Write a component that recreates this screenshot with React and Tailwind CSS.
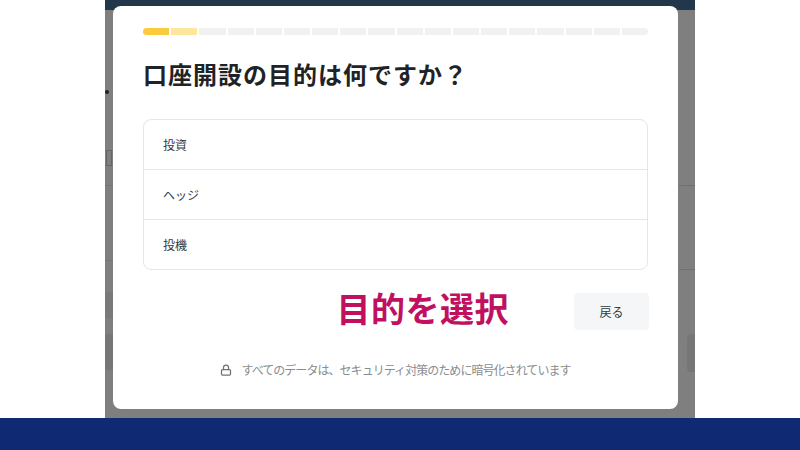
import { Lock } from 'lucide-react'

const segments = Array.from({ length: 18 }, (_, i) => i)
const options = ['投資', 'ヘッジ', '投機']

function Progress() {
  return (
    <div className="flex h-[7px] gap-[2px]">
      {segments.map((i) => (
        <div
          key={i}
          className={
            i === 0
              ? 'flex-1 rounded-l-full bg-[#fbcb3a]'
              : i === 1
                ? 'flex-1 bg-[#fde79e]'
                : i === 17
                  ? 'flex-1 rounded-r-full bg-[#f1f1f1]'
                  : 'flex-1 bg-[#f1f1f1]'
          }
        />
      ))}
    </div>
  )
}

// what shows of the dimmed page behind the modal
function Backdrop() {
  return (
    <>
      <div className="absolute left-0 top-[90px] h-[4px] w-[4px] rounded-full bg-[#222]" />
      <div className="absolute left-[1px] top-[150px] h-[16px] w-[6px] border border-[#666]" />
      <div className="absolute left-0 top-[185px] h-px w-[8px] bg-[#747474]" />
      <div className="absolute left-0 top-[260px] h-px w-[8px] bg-[#747474]" />
      <div className="absolute left-0 top-[292px] h-[26px] w-[8px] bg-[#797979]" />
      <div className="absolute left-0 top-[334px] h-[36px] w-[8px] bg-[#767676]" />
      <div className="absolute right-0 top-[185px] h-px w-[16px] bg-[#707070]" />
      <div className="absolute right-0 top-[269px] h-px w-[16px] bg-[#707070]" />
      <div className="absolute right-0 top-[334px] h-[38px] w-[8px] rounded-l bg-[#767676]" />
    </>
  )
}

export default function App() {
  return (
    <div className="flex h-[450px] w-[800px] flex-col overflow-hidden bg-white font-['Noto_Sans_CJK_JP',sans-serif]">
      <main className="relative mx-auto flex h-[418px] w-[590px] flex-col bg-[#7f7f7f]">
        <Backdrop />
        <div className="h-[10px] bg-[#22384a]" />
        <div className="relative ml-2 mr-[17px] mt-[-4px] flex h-[403px] flex-col rounded-lg bg-white px-[30px] pt-[22px]">
          <Progress />
          <h1 className="mt-[21px] h-[36px] text-[24px] font-bold leading-[36px] tracking-[1px] text-[#1f2326]">
            口座開設の目的は何ですか？
          </h1>
          <ul className="mt-[27px] rounded-lg border border-[#e6e6e6]">
            {options.map((option, i) => (
              <li
                key={option}
                className={
                  i === 0
                    ? 'flex h-[49px] items-center px-[19px] text-[12px] text-[#33383c]'
                    : 'flex h-[50px] items-center border-t border-[#e6e6e6] px-[19px] text-[12px] text-[#33383c]'
                }
              >
                {option}
              </li>
            ))}
          </ul>
          <div className="mt-[23px] flex h-[37px] items-center justify-end">
            <span className="mb-[8px] mr-[65px] text-[34px] font-bold leading-none tracking-[0.5px] text-[#c0105f]">目的を選択</span>
            <button className="-mr-px h-[37px] w-[75px] rounded bg-[#f4f6f7] text-[12px] text-[#33383c]">戻る</button>
          </div>
          <p className="mt-[31px] flex items-center justify-center gap-[9px] text-[12px] leading-[18px] tracking-[-0.95px] text-[#8a8d90]">
            <Lock className="h-[12px] w-[12px] text-[#6f7275]" strokeWidth={2.5} />
            すべてのデータは、セキュリティ対策のために暗号化されています
          </p>
        </div>
      </main>
      <footer className="h-[32px] bg-[#0f2a72]" />
    </div>
  )
}
